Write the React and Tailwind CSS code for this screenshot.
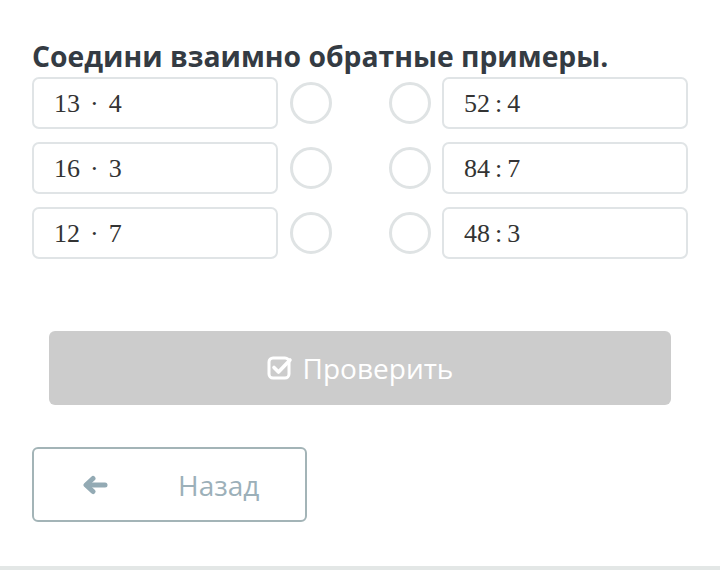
import React from "react";

const rows = [
  { a: "13", op: "·", b: "4", c: "52", d: "4" },
  { a: "16", op: "·", b: "3", c: "84", d: "7" },
  { a: "12", op: "·", b: "7", c: "48", d: "3" },
];

function Circle() {
  return <div className="w-[42px] h-[42px] rounded-full border-[3px] border-[#dfe3e4] bg-white shrink-0" />;
}

function Box({ children }) {
  return (
    <div className="w-[246px] h-[52px] shrink-0 border-2 border-[#e0e4e6] rounded-[7px] flex items-center pl-[20px] text-[26px] text-[#333] font-['Liberation_Serif',serif]">
      {children}
    </div>
  );
}

function CheckSquare() {
  return (
    <svg viewBox="0 0 26 26" className="w-[26px] h-[26px]" fill="none" stroke="currentColor" strokeLinecap="round" strokeLinejoin="round">
      <rect x="2" y="3" width="20" height="20" rx="4" strokeWidth="3" />
      <path d="M7 12.5l4.5 4.5L23 5" strokeWidth="3.6" />
    </svg>
  );
}

function ArrowLeft() {
  return (
    <svg viewBox="0 0 26 20" className="w-[26px] h-[20px]" fill="none" stroke="currentColor" strokeLinecap="round" strokeLinejoin="round">
      <path d="M23 10H5" strokeWidth="5" />
      <path d="M11 3.5L4 10l7 6.5" strokeWidth="5" />
    </svg>
  );
}

export default function App() {
  return (
    <div className="w-[720px] h-[570px] bg-white flex flex-col font-['Open_Sans',sans-serif] overflow-hidden">
      <div className="flex-1 px-[32px] pt-[39px]">
        <h1 className="text-[28.3px] leading-[35px] font-bold text-[#343b43]">
          Соедини взаимно обратные примеры.
        </h1>

        {/* pairs */}
        <div className="mt-[3px] flex flex-col gap-[13px]">
          {rows.map((r) => (
            <div key={r.a} className="flex items-center">
              <Box>
                <span>{r.a}</span>
                <span className="mx-[10px]">{r.op}</span>
                <span>{r.b}</span>
              </Box>
              <div className="ml-[12px]"><Circle /></div>
              <div className="ml-[57px]"><Circle /></div>
              <div className="ml-[11px]">
                <Box>
                  <span>{r.c}</span>
                  <span className="mx-[5px]">:</span>
                  <span>{r.d}</span>
                </Box>
              </div>
            </div>
          ))}
        </div>

        <div className="mt-[72px] mx-[17px] h-[74px] bg-[#cccccc] rounded-[6px] flex items-center justify-center gap-[10px] text-white text-[28px]">
          <CheckSquare />
          <span>Проверить</span>
        </div>

        <div className="mt-[42px] w-[275px] h-[75px] border-2 border-[#a3b4b7] rounded-[6px] flex items-center text-[#9cb0b9] text-[28px]">
          <span className="ml-[48px] text-[#93aab4]"><ArrowLeft /></span>
          <span className="ml-[70px]">Назад</span>
        </div>
      </div>
      <div className="h-[4px] bg-[#e3e7e6]" />
    </div>
  );
}
